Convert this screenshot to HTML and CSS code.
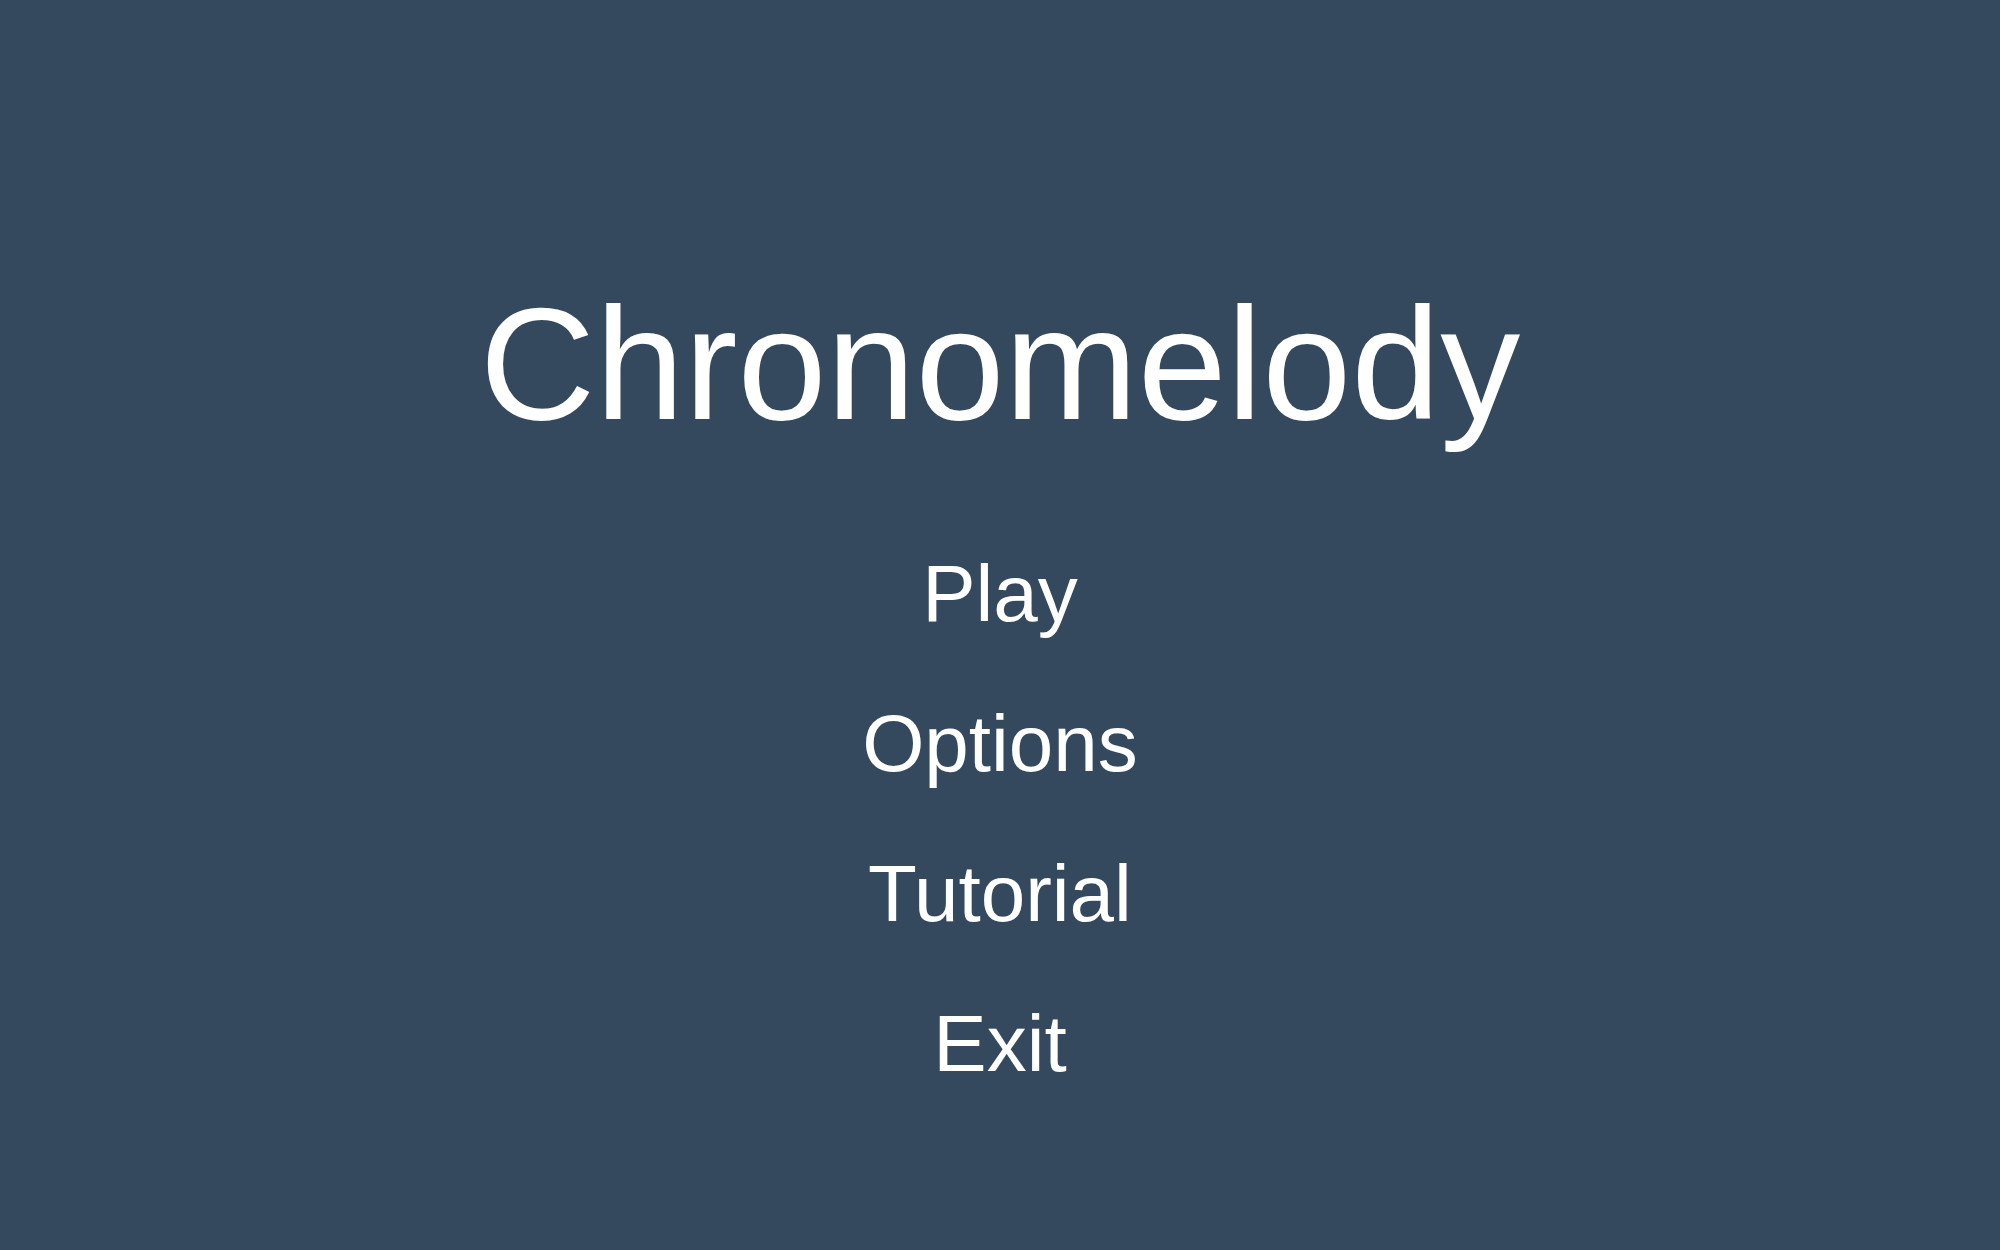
FILE: index.html
```html
<!DOCTYPE html>
<html lang="en">
<head>
<meta charset="utf-8">
<title>Chronomelody</title>
<link rel="stylesheet" href="styles.css">
</head>
<body>
<main class="menu-screen">
  <h1 class="title">Chronomelody</h1>
  <nav class="menu">
    <a class="menu-item" href="#">Play</a>
    <a class="menu-item" href="#">Options</a>
    <a class="menu-item" href="#">Tutorial</a>
    <a class="menu-item" href="#">Exit</a>
  </nav>
</main>
</body>
</html>
```
FILE: styles.css
```css
html, body {
  margin: 0;
  padding: 0;
  height: 100%;
}
body {
  background: #34495e;
  color: #ffffff;
  font-family: "Liberation Sans", Arial, sans-serif;
  overflow: hidden;
}
.menu-screen {
  display: flex;
  flex-direction: column;
  align-items: center;
  padding-top: 284px;
}
.title {
  margin: 0;
  font-size: 160px;
  line-height: 160px;
  font-weight: normal;
}
.menu {
  margin-top: 75px;
  display: flex;
  flex-direction: column;
  align-items: center;
}
.menu-item {
  display: block;
  color: #ffffff;
  text-decoration: none;
  font-size: 80px;
  line-height: 150px;
}
```
